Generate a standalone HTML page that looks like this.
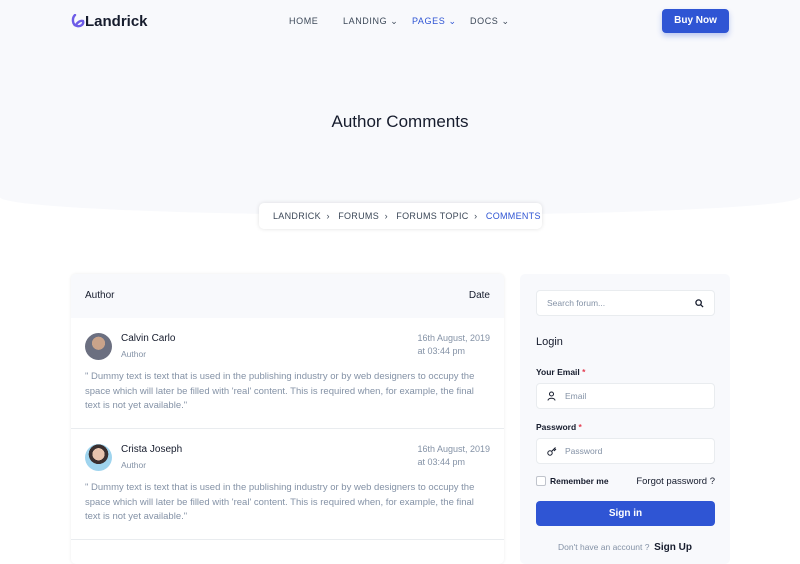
<!DOCTYPE html>
<html><head><style>
*{box-sizing:border-box;margin:0;padding:0}
body{width:800px;height:550px;overflow:hidden;background:#fff;font-family:"Liberation Sans",sans-serif;color:#3c4858;position:relative}
.hero{position:absolute;left:0;top:0;width:800px;height:215px;background:#f8f9fc;border-radius:0 0 50% 50%/0 0 18px 18px}
.nav{position:absolute;top:16px;font-size:9px;letter-spacing:.6px;color:#3c4858}
.btn{position:absolute;left:662px;top:9px;width:67px;height:24px;background:#2f55d4;color:#fff;border-radius:4px;font-size:10px;font-weight:bold;text-align:center;line-height:24px;box-shadow:0 3px 6px rgba(47,85,212,.3)}
h1{position:absolute;top:112px;width:800px;text-align:center;font-size:17px;font-weight:normal;color:#161c2d}
.bc{position:absolute;left:259px;top:203px;width:283px;height:26px;background:#fff;border-radius:5px;box-shadow:0 0 4px rgba(0,0,0,.12);font-size:9px;line-height:26px;padding-left:14px;color:#3c4858;letter-spacing:.3px}
.card{position:absolute;left:71px;top:274px;width:433px;height:290px;border-radius:5px;box-shadow:0 0 3px rgba(0,0,0,.08);background:#fff}
.ch{height:44px;background:#f8f9fc;font-size:10px;color:#161c2d;line-height:44px;padding:0 14px;display:flex;justify-content:space-between;border-radius:5px 5px 0 0}
.row{height:111px;border-bottom:1px solid #e9ecef;position:relative}
.av{position:absolute;left:14px;top:15px;width:27px;height:27px;border-radius:50%;background:radial-gradient(circle at 50% 38%,#c9a38a 0 30%,#6b6f80 31% 100%)}
.nm{position:absolute;left:50px;top:15px;font-size:10px;color:#161c2d}
.au{position:absolute;left:50px;top:31px;font-size:8.5px;color:#8492a6}
.dt{position:absolute;right:14px;top:14px;font-size:9px;color:#8492a6;line-height:13px}
.tx{position:absolute;left:14px;top:52px;right:14px;font-size:9.5px;color:#8492a6;line-height:14.5px}
.side{position:absolute;left:520px;top:274px;width:210px;height:290px;background:#f8f9fc;border-radius:5px}
.inp{position:absolute;left:16px;width:179px;height:26px;background:#fff;border:1px solid #e9ecef;border-radius:4px;font-size:8.5px;color:#8492a6;line-height:24px}
.lab{position:absolute;left:16px;font-size:8.5px;font-weight:bold;color:#161c2d}
.lab b{color:#e43f52}
</style></head><body>
<div class="hero"></div>
<div style="position:absolute;left:71px;top:13px;font-size:15px;font-weight:bold;color:#161c2d"><svg width="14" height="14" viewBox="0 0 14 14" style="vertical-align:-2px"><path d="M4 1C1 4 1 11 6 12C10 13 13 10 12 7C9 6 6 9 5 11" fill="none" stroke="#6d5ce7" stroke-width="2.4" stroke-linecap="round"/></svg>Landrick</div>
<div class="nav" style="left:289px">HOME</div>
<div class="nav" style="left:343px">LANDING ⌄</div>
<div class="nav" style="left:412px;color:#2f55d4">PAGES ⌄</div>
<div class="nav" style="left:470px">DOCS ⌄</div>
<div class="btn">Buy Now</div>
<h1>Author Comments</h1>
<div class="bc">LANDRICK &nbsp;›&nbsp;&nbsp; FORUMS &nbsp;›&nbsp;&nbsp; FORUMS TOPIC &nbsp;›&nbsp;&nbsp; <span style="color:#2f55d4">COMMENTS</span></div>
<div class="card">
<div class="ch"><span>Author</span><span>Date</span></div>
<div class="row"><div class="av"></div><div class="nm">Calvin Carlo</div><div class="au">Author</div><div class="dt">16th August, 2019<br>at 03:44 pm</div><div class="tx">" Dummy text is text that is used in the publishing industry or by web designers to occupy the space which will later be filled with 'real' content. This is required when, for example, the final text is not yet available."</div></div>
<div class="row"><div class="av" style="background:radial-gradient(circle at 50% 38%,#e8c4ae 0 28%,#3a2f2f 29% 45%,#9fd4ee 46%)"></div><div class="nm">Crista Joseph</div><div class="au">Author</div><div class="dt">16th August, 2019<br>at 03:44 pm</div><div class="tx">" Dummy text is text that is used in the publishing industry or by web designers to occupy the space which will later be filled with 'real' content. This is required when, for example, the final text is not yet available."</div></div>
</div>
<div class="side">
<div class="inp" style="top:16px;padding-left:10px">Search forum...<svg style="position:absolute;right:10px;top:8px" width="9" height="9" viewBox="0 0 10 10"><circle cx="4" cy="4" r="3" fill="none" stroke="#161c2d" stroke-width="1.4"/><path d="M6.3 6.3L9 9" stroke="#161c2d" stroke-width="1.4"/></svg></div>
<div style="position:absolute;left:16px;top:62px;font-size:11px;color:#161c2d">Login</div>
<div class="lab" style="top:93px">Your Email <b>*</b></div>
<div class="inp" style="top:109px;padding-left:28px"><svg style="position:absolute;left:10px;top:7px" width="9" height="10" viewBox="0 0 9 10"><circle cx="4.5" cy="3" r="2" fill="none" stroke="#161c2d"/><path d="M1 9.5C1 6.5 8 6.5 8 9.5" fill="none" stroke="#161c2d"/></svg>Email</div>
<div class="lab" style="top:148px">Password <b>*</b></div>
<div class="inp" style="top:164px;padding-left:28px"><svg style="position:absolute;left:10px;top:7px" width="10" height="10" viewBox="0 0 10 10"><circle cx="3" cy="7" r="2.2" fill="none" stroke="#161c2d"/><path d="M4.6 5.4L8.5 1.5M6.5 3.5L8 5M7.5 2.5L9 4" fill="none" stroke="#161c2d"/></svg>Password</div>
<div style="position:absolute;left:16px;top:202px;width:10px;height:10px;border:1px solid #c0c4cc;border-radius:2px;background:#fff"></div>
<div style="position:absolute;left:30px;top:202px;font-size:8.5px;font-weight:bold;color:#161c2d">Remember me</div>
<div style="position:absolute;right:15px;top:202px;font-size:9.5px;color:#161c2d">Forgot password ?</div>
<div style="position:absolute;left:16px;top:227px;width:179px;height:25px;background:#2f55d4;border-radius:4px;color:#fff;font-size:10px;font-weight:bold;text-align:center;line-height:25px">Sign in</div>
<div style="position:absolute;left:0;width:210px;top:268px;text-align:center;font-size:8.5px;color:#8492a6">Don't have an account ? &nbsp;<b style="color:#161c2d;font-size:10px">Sign Up</b></div>
</div>
</body></html>
